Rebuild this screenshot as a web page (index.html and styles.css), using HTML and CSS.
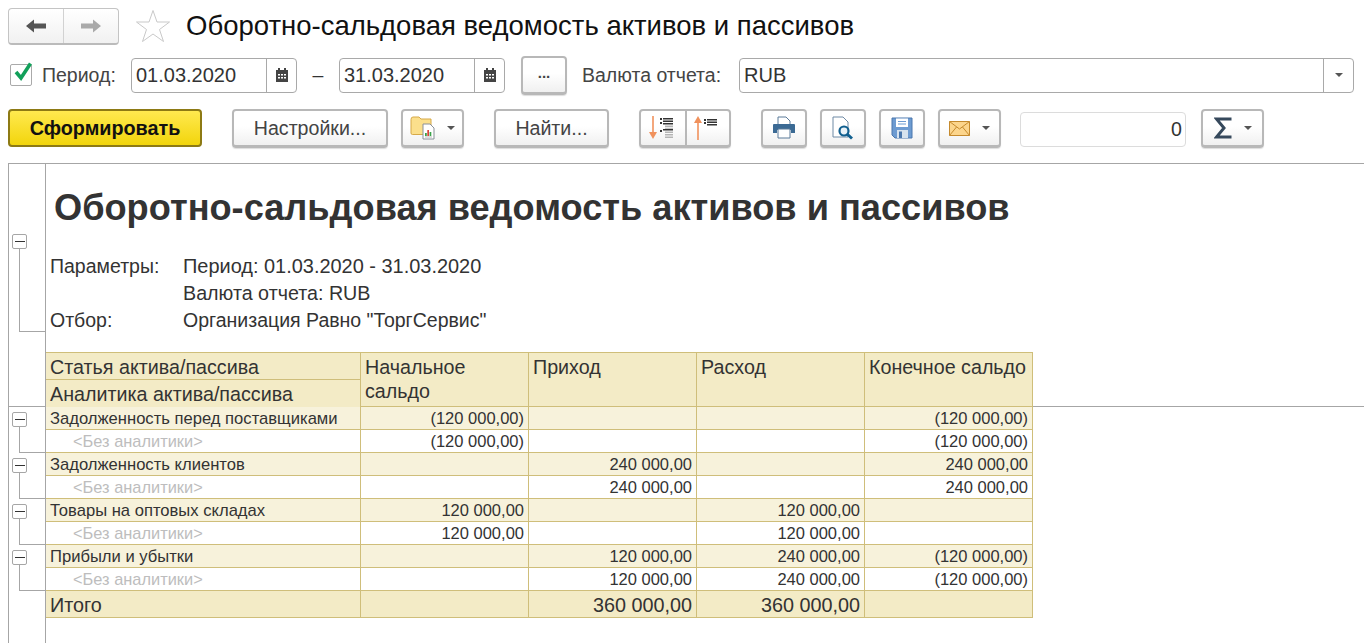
FILE: index.html
```html
<!DOCTYPE html>
<html lang="ru">
<head>
<meta charset="utf-8">
<title>Оборотно-сальдовая ведомость активов и пассивов</title>
<link rel="stylesheet" href="styles.css">
</head>
<body>
<div class="page">
  <header class="title-bar">
    <div class="nav-pair">
      <button class="nav-btn"><svg width="22" height="16" viewBox="0 0 22 16"><path d="M1 8 9 1.500V5.500H21V10.500H9V14.500Z" fill="#555"/></svg></button>
      <button class="nav-btn"><svg width="22" height="16" viewBox="0 0 22 16"><path d="M21 8 13 1.500V5.500H1V10.500H13V14.500Z" fill="#aaa"/></svg></button>
    </div>
    <svg class="star" width="36" height="34" viewBox="0 0 36 34"><path d="M18 1.500 22 13H34.500L24.500 20.500 28.500 32.500 18 25 7.500 32.500 11.500 20.500 1.500 13H14Z" fill="#fff" stroke="#c9c9c9"/></svg>
    <h1 class="form-title">Оборотно-сальдовая ведомость активов и пассивов</h1>
  </header>

  <div class="period-bar">
    <span class="check"><svg width="24" height="24" viewBox="0 0 24 24"><path d="M5 12 10 18 19.500 3.500" fill="none" stroke="#12a05a" stroke-width="3.600"/></svg></span>
    <label class="lbl lbl-period">Период:</label>
    <div class="field date">
      <span class="field-text">01.03.2020</span>
      <span class="field-btn"><svg width="14" height="16" viewBox="0 0 14 16"><path d="M1 3H3V1H5V3H9V1H11V3H13V15H1Z" fill="#444"/><path d="M3 7h2v1.500H3zM6 7h2v1.500H6zM9 7h2v1.500H9zM3 10h2v1.500H3zM6 10h2v1.500H6zM9 10h2v1.500H9z" fill="#fff"/></svg></span>
    </div>
    <span class="dash">–</span>
    <div class="field date">
      <span class="field-text">31.03.2020</span>
      <span class="field-btn"><svg width="14" height="16" viewBox="0 0 14 16"><path d="M1 3H3V1H5V3H9V1H11V3H13V15H1Z" fill="#444"/><path d="M3 7h2v1.500H3zM6 7h2v1.500H6zM9 7h2v1.500H9zM3 10h2v1.500H3zM6 10h2v1.500H6zM9 10h2v1.500H9z" fill="#fff"/></svg></span>
    </div>
    <button class="btn btn-dots">...</button>
    <label class="lbl lbl-currency">Валюта отчета:</label>
    <div class="field currency">
      <span class="field-text">RUB</span>
      <span class="field-btn"><i class="caret"></i></span>
    </div>
  </div>

  <div class="action-bar">
    <button class="btn-primary">Сформировать</button>
    <button class="btn btn-settings">Настройки...</button>
    <button class="btn btn-menu btn-folder">
      <svg width="25" height="24" viewBox="0 0 25 24"><path d="M1 3.500Q1 1 3 1H9L11 3H21V17Q21 18.500 19.500 18.500H2.500Q1 18.500 1 17Z" fill="#fbdf8c" stroke="#d6a949"/><path d="M13 8H20L24 12V23H13Z" fill="#fff" stroke="#8a9099"/><path d="M15 20V17H16.800V20Z" fill="#3aa34a"/><path d="M17.300 20V14H19V20Z" fill="#d9433a"/><path d="M19.600 20V16H21.300V20Z" fill="#3aa34a"/><path d="M15 21H22" stroke="#bbb"/></svg>
      <i class="caret"></i>
    </button>
    <button class="btn btn-find">Найти...</button>
    <div class="btn-group">
      <button class="seg seg-down"><svg width="30" height="24" viewBox="0 0 30 24"><path d="M5 0V20" stroke="#f0915c" stroke-width="1.600"/><path d="M1 16H9L5 23Z" fill="#f0915c"/><path d="M12 2h2v2h-2zM12 6h2v2h-2zM12 14h2v2h-2zM15 2h10v1.500H15zM15 4.500h10V6H15zM15 7h10v1.500H15zM15 13h10v1.500H15z" fill="#333"/><path d="M17 9.500h8V11h-8zM17 11.800h8v1h-8zM17 15.500h8V17h-8zM17 18h8v1.500h-8zM17 20.500h8V22h-8z" fill="#b5b5b5"/></svg></button>
      <button class="seg seg-up"><svg width="30" height="24" viewBox="0 0 30 24"><path d="M5 24V4" stroke="#f0915c" stroke-width="1.600"/><path d="M1 7H9L5 0Z" fill="#f0915c"/><path d="M11 3h2v2h-2zM11 6h2v2h-2zM14 3h10v1.500H14zM14 5.500h10V7H14zM14 8h10v1.500H14z" fill="#333"/></svg></button>
    </div>
    <button class="btn btn-icon btn-print"><svg width="24" height="24" viewBox="0 0 24 24"><path d="M6 10V1H14L18 5V10Z" fill="#fff" stroke="#5b7a99"/><path d="M2 8H22Q23 8 23 9V17H19V14H5V17H1V9Q1 8 2 8Z" fill="#3b6a94"/><path d="M6 13H18V22H6Z" fill="#fff" stroke="#5b7a99"/></svg></button>
    <button class="btn btn-icon btn-preview"><svg width="24" height="24" viewBox="0 0 24 24"><path d="M2 1H12L17 6V21H2Z" fill="#fff" stroke="#6f8aa5"/><circle cx="13" cy="15" r="4.500" fill="#e9f2f8" stroke="#105f8f" stroke-width="2.200"/><path d="M16 18 21 22.500" stroke="#105f8f" stroke-width="3"/></svg></button>
    <button class="btn btn-icon btn-save"><svg width="22" height="22" viewBox="0 0 22 22"><path d="M1 1H21V21H4L1 18Z" fill="#6d9bd1" stroke="#4a77ad"/><path d="M5 1.500H17V10H5Z" fill="#fff"/><path d="M7 4H15V5H7ZM7 6.500H15V7.500H7Z" fill="#6d9bd1"/><path d="M6 13H17V21H6Z" fill="#d6e2ee"/><path d="M8 14.500H11V21H8Z" fill="#4a77ad"/></svg></button>
    <button class="btn btn-menu btn-mail">
      <svg width="21" height="15" viewBox="0 0 21 15"><path d="M.5.500H20.500V14.500H.5Z" fill="#fcd58c" stroke="#c58a2e"/><path d="M.5.500 10.500 8 20.500.5M.5 14.500 7.500 6M20.500 14.500 13.500 6" fill="none" stroke="#c58a2e"/></svg>
      <i class="caret"></i>
    </button>
    <div class="field sum-field"><span class="field-text">0</span></div>
    <button class="btn btn-menu btn-sum">
      <svg width="18" height="22" viewBox="0 0 18 22"><path d="M17.500 2H2.500L10 11 2.500 20H17.500" fill="none" stroke="#36495c" stroke-width="3"/></svg>
      <i class="caret"></i>
    </button>
  </div>

  <main class="sheet">
    <div class="gutter outline first"><span class="toggle"></span><span class="stem"></span></div>
    <section class="report-head">
      <h2 class="report-title">Оборотно-сальдовая ведомость активов и пассивов</h2>
      <dl class="params">
        <dt>Параметры:</dt><dd class="param-dates">Период: 01.03.2020 - 31.03.2020</dd>
        <dt></dt><dd>Валюта отчета: RUB</dd>
        <dt>Отбор:</dt><dd class="param-filter">Организация Равно "ТоргСервис"</dd>
      </dl>
    </section>

    <div class="gutter gutter-head"></div>
    <div class="cell hd hd-top">Статья актива/пассива</div>
    <div class="cell hd hd-tall">Начальное сальдо</div>
    <div class="cell hd hd-tall">Приход</div>
    <div class="cell hd hd-tall">Расход</div>
    <div class="cell hd hd-tall">Конечное сальдо</div>
    <div class="tail tail-head"></div>
    <div class="cell hd hd-bottom">Аналитика актива/пассива</div>

    <div class="gutter outline group"><span class="toggle"></span><span class="stem"></span></div>
    <div class="cell row-main">Задолженность перед поставщиками</div>
    <div class="cell row-main num">(120 000,00)</div><div class="cell row-main num"></div><div class="cell row-main num"></div><div class="cell row-main num">(120 000,00)</div>
    <div class="tail tail-group"></div>
    <div class="cell row-sub sub-label">&lt;Без аналитики&gt;</div>
    <div class="cell row-sub num">(120 000,00)</div><div class="cell row-sub num"></div><div class="cell row-sub num"></div><div class="cell row-sub num">(120 000,00)</div>

    <div class="gutter outline group"><span class="toggle"></span><span class="stem"></span></div>
    <div class="cell row-main">Задолженность клиентов</div>
    <div class="cell row-main num"></div><div class="cell row-main num">240 000,00</div><div class="cell row-main num"></div><div class="cell row-main num">240 000,00</div>
    <div class="tail tail-group"></div>
    <div class="cell row-sub sub-label">&lt;Без аналитики&gt;</div>
    <div class="cell row-sub num"></div><div class="cell row-sub num">240 000,00</div><div class="cell row-sub num"></div><div class="cell row-sub num">240 000,00</div>

    <div class="gutter outline group"><span class="toggle"></span><span class="stem"></span></div>
    <div class="cell row-main">Товары на оптовых складах</div>
    <div class="cell row-main num">120 000,00</div><div class="cell row-main num"></div><div class="cell row-main num">120 000,00</div><div class="cell row-main num"></div>
    <div class="tail tail-group"></div>
    <div class="cell row-sub sub-label">&lt;Без аналитики&gt;</div>
    <div class="cell row-sub num">120 000,00</div><div class="cell row-sub num"></div><div class="cell row-sub num">120 000,00</div><div class="cell row-sub num"></div>

    <div class="gutter outline group"><span class="toggle"></span><span class="stem"></span></div>
    <div class="cell row-main">Прибыли и убытки</div>
    <div class="cell row-main num"></div><div class="cell row-main num">120 000,00</div><div class="cell row-main num">240 000,00</div><div class="cell row-main num">(120 000,00)</div>
    <div class="tail tail-group"></div>
    <div class="cell row-sub sub-label">&lt;Без аналитики&gt;</div>
    <div class="cell row-sub num"></div><div class="cell row-sub num">120 000,00</div><div class="cell row-sub num">240 000,00</div><div class="cell row-sub num">(120 000,00)</div>

    <div class="gutter gutter-rest"></div>
    <div class="cell total">Итого</div>
    <div class="cell total num"></div><div class="cell total num">360 000,00</div><div class="cell total num">360 000,00</div><div class="cell total num"></div>
  </main>
</div>
</body>
</html>
```

FILE: styles.css
```css
* { box-sizing: border-box; }

html, body { height: 100%; margin: 0; }

body {
  background: #fff;
  color: #333;
  font-family: "Liberation Sans", Arial, sans-serif;
  overflow: hidden;
}

.page {
  display: flex;
  flex-direction: column;
  height: 643px;
}

button {
  font-family: inherit;
  padding: 0;
  margin: 0;
  cursor: default;
}

/* Window title row */
.title-bar {
  display: flex;
  align-items: center;
  height: 52px;
  padding-left: 8px;
}

.nav-pair {
  display: flex;
  width: 111px;
  height: 37px;
  margin-top: 1px;
  border: 1px solid #c4c4c4;
  border-bottom: 2px solid #bbb;
  border-radius: 4px;
  background: linear-gradient(#fff, #f1f1f1);
  overflow: hidden;
}

.nav-btn {
  flex: 1;
  display: flex;
  align-items: center;
  justify-content: center;
  border: 0;
  background: none;
}

.nav-btn + .nav-btn { border-left: 1px solid #d2d2d2; }

.star { margin-left: 16px; flex: none; }

.form-title {
  margin: 0 0 0 15px;
  font-size: 27.500px;
  font-weight: 400;
  color: #111;
  white-space: nowrap;
}

/* Period and currency row */
.period-bar {
  display: flex;
  align-items: center;
  height: 46px;
  padding-left: 10px;
}

.check {
  width: 22px;
  height: 22px;
  border: 1px solid #aaa;
  border-radius: 2px;
  position: relative;
  flex: none;
}

.check svg { position: absolute; left: 0; top: -5px; }

.lbl { font-size: 19.500px; color: #444; white-space: nowrap; }
.lbl-period { margin-left: 10px; width: 89px; }
.lbl-currency { margin-left: 15px; width: 157px; }

.field {
  display: flex;
  align-items: stretch;
  height: 35px;
  border: 1px solid #a9a9a9;
  border-radius: 4px;
  background: #fff;
  font-size: 20px;
  color: #333;
}

.field-text {
  flex: 1;
  display: flex;
  align-items: center;
  padding-left: 4px;
  padding-right: 3px;
}

.field-btn {
  width: 30px;
  display: flex;
  align-items: center;
  justify-content: center;
  border-left: 1px solid #a9a9a9;
}

.date { width: 166px; }
.currency { width: 615px; }

.dash {
  width: 42px;
  text-align: center;
  font-size: 19.500px;
  color: #333;
}

.caret {
  display: block;
  width: 0;
  height: 0;
  border-left: 4px solid transparent;
  border-right: 4px solid transparent;
  border-top: 4px solid #555;
}

/* Raised push buttons */
.btn {
  height: 39px;
  display: flex;
  align-items: center;
  justify-content: center;
  flex: none;
  border: 2px solid #b8b8b8;
  border-bottom-width: 3px;
  border-radius: 4px;
  background: linear-gradient(#fff 45%, #f0f0f0);
  box-shadow: 0 1px 1px #ddd;
  font-size: 19.600px;
  color: #444;
}

.btn-dots { width: 46px; margin-left: 16px; padding-bottom: 4px; font-weight: 700; font-size: 15px; }

/* Report commands row */
.action-bar {
  display: flex;
  align-items: flex-start;
  height: 65px;
  padding: 11px 0 0 8px;
}

.btn-primary {
  width: 194px;
  height: 38px;
  flex: none;
  border: 2px solid #8d7a14;
  border-radius: 4px;
  background: linear-gradient(#ffe94f, #f2d50c);
  font-size: 19.800px;
  font-weight: 700;
  color: #111;
}

.btn-settings { width: 156px; margin-left: 30px; }
.btn-folder { width: 63px; margin-left: 13px; gap: 9px; }
.btn-find { width: 115px; margin-left: 30px; }
.btn-menu { gap: 12px; }

.btn-group {
  display: flex;
  width: 92px;
  height: 39px;
  margin-left: 30px;
  flex: none;
  border: 2px solid #b8b8b8;
  border-bottom-width: 3px;
  border-radius: 4px;
  background: linear-gradient(#fff 45%, #f0f0f0);
  box-shadow: 0 1px 1px #ddd;
  overflow: hidden;
}

.seg {
  display: flex;
  align-items: center;
  justify-content: center;
  border: 0;
  background: none;
  height: 100%;
}

.seg-down { width: 46px; border-right: 2px solid #b8b8b8; }
.seg-up { flex: 1; }

.btn-icon { width: 46px; }
.btn-print { margin-left: 30px; }
.btn-preview, .btn-save { margin-left: 13px; }
.btn-mail { width: 63px; margin-left: 13px; }

.sum-field {
  width: 166px;
  margin: 3px 0 0 19px;
  border-color: #dcdcdc;
  font-size: 19.600px;
  color: #333;
}

.sum-field .field-text { justify-content: flex-end; }

.btn-sum { width: 63px; margin-left: 15px; }

/* Spreadsheet area */
.sheet {
  flex: 1;
  min-height: 0;
  margin-left: 8px;
  display: grid;
  grid-template-columns: 37px 315px 168px 168px 168px 168px 1fr;
  grid-template-rows: 188px 28px 27px repeat(8, 23px) 27px 1fr;
  border-top: 1px solid #a6a6a6;
  border-left: 1px solid #a6a6a6;
  color: #333;
}

.gutter { border-right: 1px solid #a6a6a6; }

.outline {
  display: flex;
  flex-direction: column;
  padding-left: 3px;
}

.first { padding-top: 70px; }
.group { grid-row: span 2; padding-top: 5px; }

.gutter-head { grid-row: span 2; border-bottom: 1px solid #a6a6a6; }
.gutter-rest { grid-row: span 2; }

.toggle {
  width: 15px;
  height: 15px;
  flex: none;
  border: 1px solid #a6a6a6;
  border-radius: 2px;
  background: linear-gradient(#333, #333) center / 10px 1px no-repeat, #fff;
}

.stem {
  flex: 1;
  margin-left: 7px;
  border-left: 1px solid #a6a6a6;
  border-bottom: 1px solid #a6a6a6;
}

.first .stem { flex: none; height: 83px; }

.report-head { grid-column: 2 / -1; min-width: 0; }

.report-title {
  margin: 24px 0 0 8px;
  font-size: 36.200px;
  line-height: 40px;
  font-weight: 700;
  color: #333;
  white-space: nowrap;
}

.params {
  display: grid;
  grid-template-columns: 133px 1fr;
  grid-auto-rows: 27px;
  margin: 25px 0 0 4px;
  font-size: 19.500px;
  line-height: 27px;
  color: #333;
}

.params dt, .params dd { margin: 0; white-space: nowrap; }
.params dd { font-size: 19.700px; }
.params .param-dates { font-size: 19.950px; }
.params .param-filter { font-size: 19.500px; }

.cell {
  display: block;
  overflow: hidden;
  padding: 0 4px;
  border-right: 1px solid #cfbe7a;
  border-bottom: 1px solid #cfbe7a;
  font-size: 16.600px;
  line-height: 22px;
  white-space: nowrap;
}

.hd {
  background: #f3ebc6;
  font-size: 19.700px;
  line-height: 27px;
}

.hd-top { border-top: 1px solid #cfbe7a; padding-top: 1px; }
.hd-tall { grid-row: span 2; white-space: normal; border-top: 1px solid #cfbe7a; padding-top: 2px; line-height: 24px; }
.hd-bottom { padding-top: 1px; line-height: 27px; border-bottom: 0; }

.tail-head { grid-row: span 2; border-bottom: 1px solid #a6a6a6; }
.tail-group { grid-row: span 2; }

.row-main { background: #f7f2db; }
.row-main:not(.num) { line-height: 24px; }
.row-sub { background: #fff; }
.sub-label { padding-left: 27px; color: #bdbdbd; font-size: 16.400px; }
.num { text-align: right; font-size: 16.500px; }

.total {
  background: #f3ebc6;
  font-size: 19.800px;
  line-height: 28px;
}
```
